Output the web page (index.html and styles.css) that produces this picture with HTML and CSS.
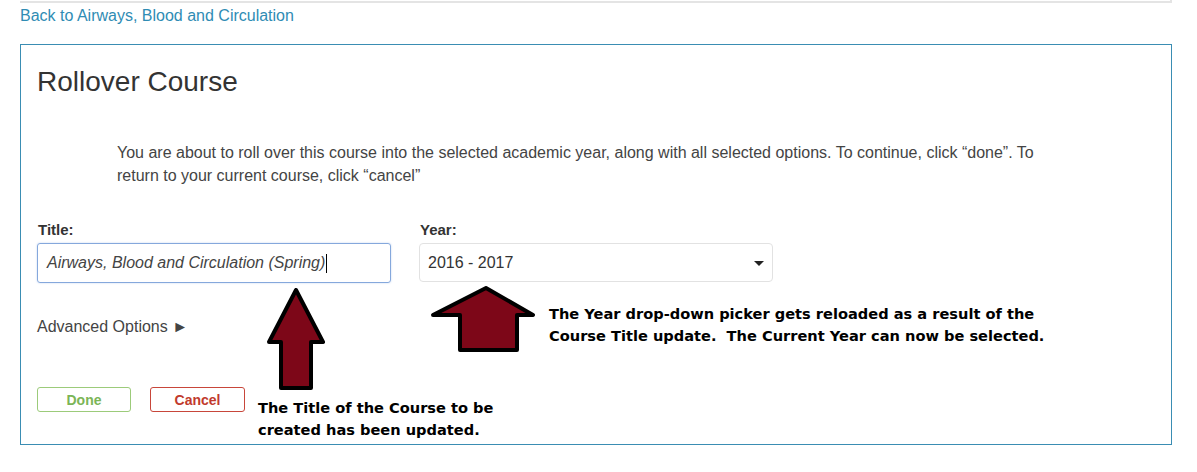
FILE: index.html
```html
<!DOCTYPE html>
<html>
<head>
<meta charset="utf-8">
<link rel="stylesheet" href="styles.css">
</head>
<body>
<div class="page">
  <div class="topbar"></div>
  <a class="back" href="#">Back to Airways, Blood and Circulation</a>
  <div class="panel">
    <h1 class="heading">Rollover Course</h1>
    <p class="intro">You are about to roll over this course into the selected academic year, along with all selected options. To continue, click “done”. To return to your current course, click “cancel”</p>
    <div class="fields">
      <div class="field">
        <label class="label">Title:</label>
        <div class="input">Airways, Blood and Circulation (Spring)<span class="caret"></span></div>
      </div>
      <div class="field">
        <label class="label">Year:</label>
        <div class="select"><span>2016 - 2017</span><span class="tri"></span></div>
      </div>
    </div>
    <div class="advanced">Advanced Options ►</div>
    <div class="buttons">
      <button class="btn done">Done</button>
      <button class="btn cancel">Cancel</button>
    </div>
  </div>

  <svg class="arrow arrow-v" width="70" height="110" viewBox="0 0 70 110">
    <polygon points="32,2 59,54 47,54 47,100 17,100 17,54 5,54" fill="#7d0718" stroke="#000" stroke-width="4" stroke-linejoin="round"/>
  </svg>
  <svg class="arrow arrow-h" width="110" height="70" viewBox="0 0 110 70">
    <polygon points="55,2 102,29 86,29 86,64 29,64 29,29 2,29" fill="#7d0718" stroke="#000" stroke-width="4" stroke-linejoin="round"/>
  </svg>
  <div class="note note-year">The Year drop-down picker gets reloaded as a result of the<br>Course Title update.&nbsp; The Current Year can now be selected.</div>
  <div class="note note-title">The Title of the Course to be<br>created has been updated.</div>
</div>
</body>
</html>
```
FILE: styles.css
```css
html, body {
  margin: 0;
  padding: 0;
  background: #fff;
}
body {
  font-family: "Liberation Sans", Arial, sans-serif;
  color: #333;
  width: 1197px;
  height: 472px;
  overflow: hidden;
}
.page {
  position: relative;
  padding: 0 25px 0 20px;
}
.topbar {
  height: 1px;
  width: 1150px;
  border-bottom: 2px solid #e4e4e4;
  border-right: 2px solid #e4e4e4;
}
.back {
  display: block;
  margin-top: 3px;
  font-size: 16px;
  line-height: 19px;
  color: #2f8cb4;
  text-decoration: none;
}
.panel {
  margin-top: 19px;
  width: 1152px;
  height: 401px;
  border: 1px solid #3a8db3;
  padding: 0 0 0 16px;
  box-sizing: border-box;
}
.heading {
  margin: 21px 0 0 0;
  font-size: 28px;
  font-weight: normal;
  line-height: 32px;
  color: #333;
}
.intro {
  margin: 43px 0 0 80px;
  width: 930px;
  font-size: 16px;
  line-height: 23px;
  color: #444;
}
.fields {
  display: flex;
  gap: 28px;
  margin-top: 34px;
}
.field {
  display: flex;
  flex-direction: column;
  width: 354px;
}
.label {
  font-size: 15px;
  font-weight: bold;
  line-height: 17px;
  margin: 0 0 5px 1px;
  color: #333;
}
.input {
  height: 40px;
  box-sizing: border-box;
  border: 1px solid #85a8dc;
  border-radius: 3px;
  box-shadow: 0 0 2px rgba(102,150,220,0.4);
  padding: 0 9px;
  font-size: 16px;
  font-style: italic;
  line-height: 38px;
  color: #444;
  display: flex;
  align-items: center;
}
.caret {
  display: inline-block;
  width: 1px;
  height: 19px;
  background: #000;
  margin-left: 1px;
}
.select {
  height: 39px;
  box-sizing: border-box;
  border: 1px solid #e2e2e2;
  border-radius: 4px;
  padding: 0 8px;
  font-size: 16px;
  color: #333;
  display: flex;
  align-items: center;
  justify-content: space-between;
}
.tri {
  width: 0;
  height: 0;
  border-left: 5px solid transparent;
  border-right: 5px solid transparent;
  border-top: 5px solid #222;
  margin-top: 2px;
}
.advanced {
  margin-top: 34px;
  font-size: 16px;
  line-height: 19px;
  color: #444;
}
.buttons {
  display: flex;
  gap: 19px;
  margin-top: 51px;
}
.btn {
  width: 94px;
  height: 25px;
  background: #fff;
  border-radius: 3px;
  font-family: "Liberation Sans", Arial, sans-serif;
  font-size: 14px;
  font-weight: bold;
  padding: 0;
}
.cancel {
  width: 95px;
}
.done {
  border: 1px solid #9ccb7a;
  color: #7bb556;
}
.cancel {
  border: 1px solid #c8463a;
  color: #c13a2d;
}
.arrow {
  position: absolute;
}
.arrow-v {
  left: 264px;
  top: 288px;
}
.arrow-h {
  left: 431px;
  top: 286px;
}
.note {
  position: absolute;
  font-family: "DejaVu Sans", sans-serif;
  font-weight: bold;
  font-size: 14.6px;
  line-height: 22px;
  color: #000;
  white-space: nowrap;
}
.note-year {
  left: 549px;
  top: 303px;
}
.note-title {
  left: 258px;
  top: 397px;
}
```
